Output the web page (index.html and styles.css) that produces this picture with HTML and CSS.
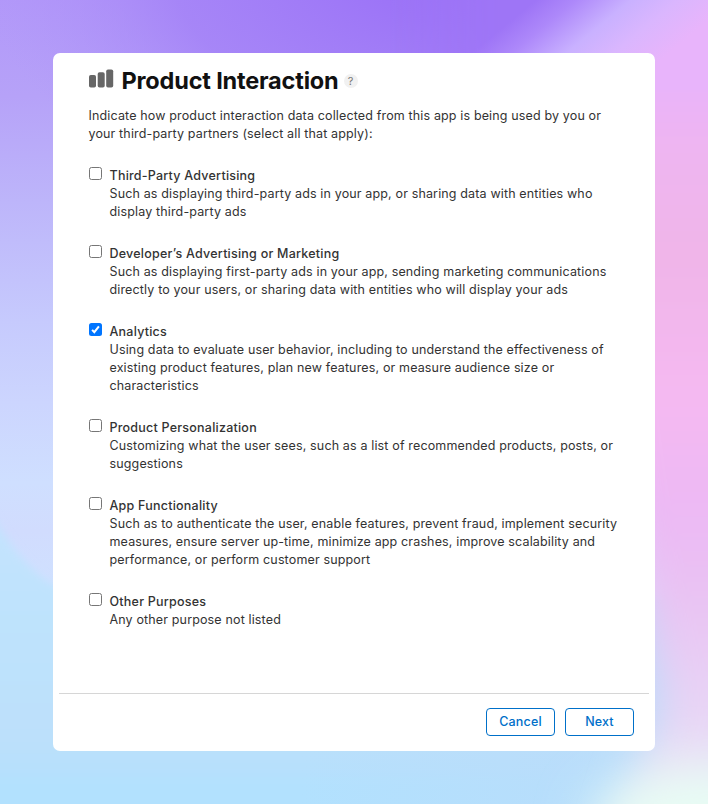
FILE: index.html
```html
<!DOCTYPE html>
<html lang="en">
<head>
<meta charset="utf-8">
<title>Product Interaction</title>
<link rel="stylesheet" href="styles.css">
</head>
<body>
<svg class="backdrop" viewBox="0 0 708 804" preserveAspectRatio="none" aria-hidden="true">
  <defs>
    <linearGradient id="cool" x1="0" y1="0" x2="0" y2="1">
      <stop offset="0" stop-color="#b298f9"/>
      <stop offset=".12" stop-color="#b6a2f8"/>
      <stop offset=".25" stop-color="#bdb5fa"/>
      <stop offset=".4" stop-color="#c6cafd"/>
      <stop offset=".5" stop-color="#ccd5fe"/>
      <stop offset=".6" stop-color="#cfdfff"/>
      <stop offset=".66" stop-color="#d1dcfe"/>
      <stop offset=".75" stop-color="#cfe2ff"/>
    </linearGradient>
    <radialGradient id="violet" gradientUnits="userSpaceOnUse" cx="0" cy="0" r="1" gradientTransform="translate(460 -30) scale(480 260)">
      <stop offset="0" stop-color="#9a70f6"/>
      <stop offset=".2" stop-color="#9d75f7"/>
      <stop offset=".6" stop-color="#a482f7" stop-opacity=".85"/>
      <stop offset="1" stop-color="#b096f9" stop-opacity="0"/>
    </radialGradient>
    <linearGradient id="water" x1="0" y1="0" x2="0" y2="1">
      <stop offset="0" stop-color="#c6e3fe"/>
      <stop offset=".3" stop-color="#bfe3fd"/>
      <stop offset=".68" stop-color="#bce0fb"/>
      <stop offset=".8" stop-color="#b3e1fe"/>
      <stop offset="1" stop-color="#ade1ff"/>
    </linearGradient>
    <linearGradient id="lake" x1="0" y1="0" x2="1" y2="0">
      <stop offset="0" stop-color="#badcfa" stop-opacity="0"/>
      <stop offset="1" stop-color="#badcfa"/>
    </linearGradient>
    <linearGradient id="warm" gradientUnits="userSpaceOnUse" x1="680" y1="0" x2="680" y2="804">
      <stop offset="0" stop-color="#e4b5fe"/>
      <stop offset=".09" stop-color="#e7b3fc"/>
      <stop offset=".17" stop-color="#eeb5f2"/>
      <stop offset=".32" stop-color="#f0b5e8"/>
      <stop offset=".5" stop-color="#f5b9f2"/>
      <stop offset=".64" stop-color="#ecb9f4"/>
      <stop offset=".75" stop-color="#e9c4f3"/>
      <stop offset=".87" stop-color="#e8d3f5"/>
      <stop offset="1" stop-color="#e8e4f6"/>
    </linearGradient>
    <linearGradient id="sweep" gradientUnits="userSpaceOnUse" x1="216" y1="264" x2="296" y2="361">
      <stop offset="0" stop-color="#9e75f6"/>
      <stop offset=".2" stop-color="#ad88fa"/>
      <stop offset=".48" stop-color="#c9b1ff"/>
      <stop offset=".72" stop-color="#dab6fe"/>
      <stop offset="1" stop-color="#e8b4fb"/>
    </linearGradient>
    <linearGradient id="fade" gradientUnits="userSpaceOnUse" x1="390" y1="0" x2="500" y2="0">
      <stop offset="0" stop-color="#000"/>
      <stop offset="1" stop-color="#fff"/>
    </linearGradient>
    <mask id="reveal" maskUnits="userSpaceOnUse" x="0" y="0" width="708" height="804"><rect width="708" height="90" fill="url(#fade)"/></mask>
    <filter id="soft4" x="-50%" y="-50%" width="200%" height="200%"><feGaussianBlur stdDeviation="4"/></filter>
    <filter id="soft20" x="-50%" y="-50%" width="200%" height="200%"><feGaussianBlur stdDeviation="20"/></filter>
    <filter id="soft28" x="-50%" y="-80%" width="200%" height="260%"><feGaussianBlur stdDeviation="26"/></filter>
  </defs>
  <rect width="708" height="804" fill="url(#cool)"/>
  <rect width="708" height="240" fill="url(#violet)"/>
  <path d="M-10 512 C10 546 34 578 60 588 L400 587 L760 600 L760 860 L-40 860 L-40 490Z" fill="url(#water)" filter="url(#soft4)"/>
  <rect x="300" y="600" width="408" height="204" fill="url(#lake)"/>
  <path d="M560 -60 L800 -60 L800 860 L610 860 L662 700 L620 500 L570 120Z" fill="url(#warm)" filter="url(#soft20)"/>
  <g mask="url(#reveal)"><rect width="708" height="90" fill="url(#sweep)"/></g>
  <ellipse cx="715" cy="825" rx="125" ry="58" fill="#e8fdf4" filter="url(#soft28)"/>
</svg>
<main class="dialog">
  <div class="content">
    <header class="heading">
      <svg class="bars" viewBox="0 0 25 20" aria-hidden="true">
        <rect x="0" y="6" width="7" height="12.5" rx="1.8"/>
        <rect x="8.7" y="3.3" width="7" height="15.2" rx="1.8"/>
        <rect x="17.2" y=".4" width="7" height="18.1" rx="1.8"/>
      </svg>
      <h1>Product Interaction</h1>
      <span class="help">?</span>
    </header>
    <p class="intro">Indicate how product interaction data collected from this app is being used by you or<br>your third-party partners (select all that apply):</p>
    <ul class="options">
      <li><span class="box"></span><div><h2>Third-Party Advertising</h2><p>Such as displaying third-party ads in your app, or sharing data with entities who<br>display third-party ads</p></div></li>
      <li><span class="box"></span><div><h2>Developer’s Advertising or Marketing</h2><p>Such as displaying first-party ads in your app, sending marketing communications<br>directly to your users, or sharing data with entities who will display your ads</p></div></li>
      <li><span class="box checked"><svg viewBox="0 0 13 13" aria-hidden="true"><path d="M3.1 6.9 L5.3 9.2 L9.9 3.3"/></svg></span><div><h2>Analytics</h2><p>Using data to evaluate user behavior, including to understand the effectiveness of<br>existing product features, plan new features, or measure audience size or<br>characteristics</p></div></li>
      <li><span class="box"></span><div><h2>Product Personalization</h2><p>Customizing what the user sees, such as a list of recommended products, posts, or<br>suggestions</p></div></li>
      <li><span class="box"></span><div><h2>App Functionality</h2><p>Such as to authenticate the user, enable features, prevent fraud, implement security<br>measures, ensure server up-time, minimize app crashes, improve scalability and<br>performance, or perform customer support</p></div></li>
      <li><span class="box"></span><div><h2>Other Purposes</h2><p>Any other purpose not listed</p></div></li>
    </ul>
  </div>
  <footer class="actions">
    <button type="button">Cancel</button>
    <button type="button">Next</button>
  </footer>
</main>
</body>
</html>
```
FILE: styles.css
```css
* { box-sizing: border-box; }

body {
  margin: 0;
  height: 804px;
  padding: 53px;
  overflow: hidden;
  color: #333;
  font: 12.5px/18px Inter, "Liberation Sans", sans-serif;
  letter-spacing: .145px;
}

h1, h2, p, ul { margin: 0; padding: 0; }

.backdrop {
  position: absolute;
  inset: 0;
  z-index: -1;
  width: 708px;
  height: 804px;
}

.dialog {
  display: flex;
  flex-direction: column;
  height: 698px;
  padding: 0 6px;
  border-radius: 7px;
  background: #fff;
}

.content {
  flex: 1;
  padding: 11px 0 0 29.5px;
  white-space: nowrap;
}

.heading { display: flex; align-items: center; height: 34px; }

.bars { width: 25px; height: 20px; margin: -5px 8px 0 0; fill: #666; }

h1 { color: #111; font-size: 23.5px; font-weight: 700; line-height: 34px; letter-spacing: -.18px; }

.help {
  width: 14px;
  height: 14px;
  margin: 0 0 0 5px;
  border-radius: 50%;
  background: #f1f1f1;
  color: #777;
  font-size: 11px;
  font-weight: 400;
  line-height: 14px;
  letter-spacing: 0;
  text-align: center;
}

.intro { margin-top: 9px; }

.options { display: grid; gap: 24px; margin-top: 24px; list-style: none; }

.options li { display: flex; gap: 8px; }

.box {
  width: 13px;
  height: 13px;
  border: 1px solid #767676;
  border-radius: 2.5px;
  background: #fff;
}

.checked { border: 0; background: #0075ff; }

.box svg { display: block; width: 13px; height: 13px; fill: none; stroke: #fff; stroke-width: 2; }

h2 { font-size: 12.5px; font-weight: 550; line-height: 18px; letter-spacing: .23px; }

.actions {
  display: flex;
  justify-content: flex-end;
  gap: 10px;
  height: 58px;
  padding: 14px 15px 0 0;
  border-top: 1px solid #d6d6d6;
}

button {
  width: 69px;
  height: 28px;
  padding: 0;
  border: 1px solid #0070c9;
  border-radius: 4px;
  background: #fff;
  color: #0070c9;
  font: 500 12.5px/24px Inter, "Liberation Sans", sans-serif;
  letter-spacing: .15px;
}
```
